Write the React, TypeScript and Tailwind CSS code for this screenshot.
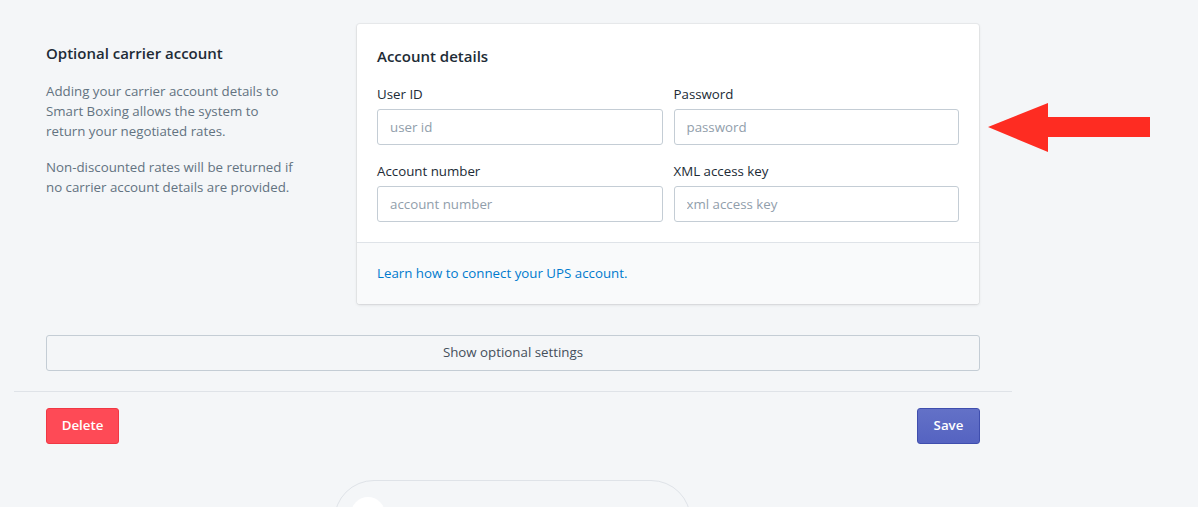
import React from "react";

const font = { fontFamily: '"Segoe UI", "Open Sans", "Noto Sans", sans-serif' };

type FieldProps = { label: string; placeholder: string };

const Field = ({ label, placeholder }: FieldProps) => (
  <div className="flex flex-col">
    <label className="text-[13.3px] leading-5 text-[#212b36] mb-[5px]">{label}</label>
    <input
      placeholder={placeholder}
      className="h-9 w-full rounded-[3px] border border-[#c4cdd5] bg-white px-3 text-[13.3px] text-[#212b36] placeholder:text-[#919eab] outline-none"
    />
  </div>
);

const App = () => {
  return (
    <div className="relative min-h-[507px] w-full overflow-hidden bg-[#f4f6f8]" style={font}>
      <div className="ml-[14px] w-[998px] pt-6">
        {/* annotated section */}
        <div className="flex px-8">
          <div className="w-[311px] pt-[17px]">
            <h2 className="text-[15px] leading-6 font-semibold text-[#212b36]">
              Optional carrier account
            </h2>
            <div className="mt-4 w-[252px] text-[13.3px] leading-5 text-[#637381]">
              <p>
                Adding your carrier account details to Smart Boxing allows the system to
                return your negotiated rates.
              </p>
              <p className="mt-4">
                Non-discounted rates will be returned if no carrier account details are
                provided.
              </p>
            </div>
          </div>

          <div className="w-[622px] rounded-[3px] bg-white shadow-[0_0_0_1px_rgba(63,63,68,0.05),0_1px_3px_0_rgba(63,63,68,0.15)]">
            <div className="px-5 pt-5 pb-5">
              <h3 className="text-[15px] leading-6 font-semibold text-[#212b36]">
                Account details
              </h3>
              <div className="mt-4 grid grid-cols-2 gap-x-[11px] gap-y-4">
                <Field label="User ID" placeholder="user id" />
                <Field label="Password" placeholder="password" />
                <Field label="Account number" placeholder="account number" />
                <Field label="XML access key" placeholder="xml access key" />
              </div>
            </div>
            <div className="rounded-b-[3px] border-t border-[#dfe3e8] bg-[#f9fafb] px-5 pt-5 pb-[21px]">
              <a href="#" className="block text-[13.3px] leading-5 text-[#007ace]">
                Learn how to connect your UPS account.
              </a>
            </div>
          </div>
        </div>

        <div className="mt-[31px] px-8">
          <button className="h-9 w-full rounded-[3px] border border-[#c4cdd5] bg-transparent text-[13.3px] text-[#454f5b]">
            Show optional settings
          </button>
        </div>

        <div className="mt-5 border-t border-[#dfe3e8]" />

        <div className="mt-4 flex justify-between px-8">
          <button className="h-9 w-[73px] rounded-[3px] border border-[#f03844] bg-[#fe4a56] text-[13.3px] font-semibold text-white">
            Delete
          </button>
          <button className="h-9 w-[63px] rounded-[3px] border border-[#3f4eae] bg-gradient-to-b from-[#6371c7] to-[#5563c1] text-[13.3px] font-semibold text-white">
            Save
          </button>
        </div>

        <div className="mt-[36px] ml-[320px] h-[80px] w-[357px] rounded-[40px] border border-[#dfe3e8] px-4 pt-4">
          <div className="flex h-[34px] w-[34px] items-center justify-center rounded-full bg-white">
            <div className="h-3 w-3 rounded-full bg-[#47c1bf]" />
          </div>
        </div>
      </div>

      {/* red annotation arrow */}
      <svg
        className="absolute left-[986px] top-[102px]"
        width="166"
        height="52"
        viewBox="986 102 166 52"
      >
        <polygon
          points="988,127 1048,103 1048,117 1150,117 1150,137 1048,137 1048,152"
          fill="#fe2c22"
        />
      </svg>
    </div>
  );
};

export default App;
